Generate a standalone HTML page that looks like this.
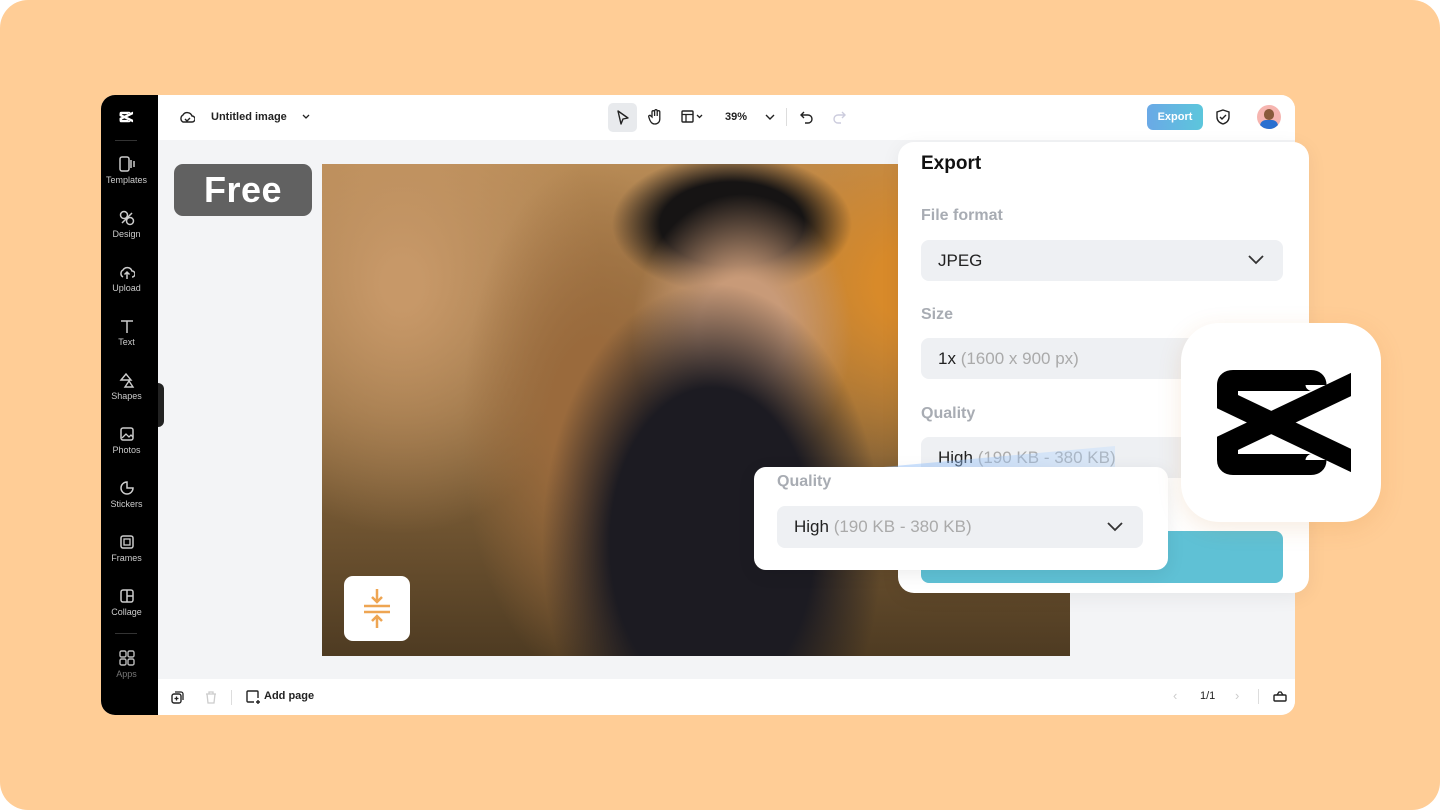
<!DOCTYPE html>
<html><head><style>
*{margin:0;padding:0;box-sizing:border-box}
body{width:1440px;height:810px;background:#fff;font-family:"Liberation Sans",sans-serif;overflow:hidden;position:relative}
.bg{position:absolute;inset:0;background:#ffcd96;border-radius:28px}
.app{position:absolute;left:101px;top:95px;width:1194px;height:620px;background:#f3f4f6;border-radius:14px;overflow:hidden}
.side{position:absolute;left:0;top:0;width:57px;height:620px;background:#000}
.side .it{position:absolute;left:-3px;width:57px;text-align:center;color:#ccc;font-size:9px}
.side svg{display:block;margin:0 auto 3px}
.top{position:absolute;left:57px;top:0;right:0;height:45px;background:#fff}
.bot{position:absolute;left:57px;bottom:0;right:0;height:36px;background:#fff}
.abs{position:absolute}
</style></head><body>
<div class="bg"></div>
<div class="app">
 <div class="side">
  <svg class="abs" style="left:14px;top:12px" width="22" height="20" viewBox="0 0 200 199"><defs><clipPath id="c1"><rect x="36" y="40" width="134" height="120"/></clipPath></defs><g clip-path="url(#c1)" fill="none" stroke="#fff" stroke-width="24"><path d="M48 83V64Q48 59 53 59H130Q133 59 133 62M48 117V135Q48 140 53 140H130Q133 140 133 137"/><path d="M20 69L190 150M20 130L190 49"/></g></svg>
  <div class="abs" style="left:14px;top:45px;width:22px;height:1px;background:#333"></div>
  <div class="it" style="top:61px"><svg width="16" height="16"><rect x="1" y="1" width="9" height="14" rx="2" stroke="#ccc" fill="none" stroke-width="1.5"/><path d="M12 4v8M15 5v6" stroke="#ccc" stroke-width="1.5"/></svg>Templates</div>
  <div class="it" style="top:115px"><svg width="16" height="16"><circle cx="5" cy="5" r="3.5" stroke="#ccc" fill="none" stroke-width="1.5"/><circle cx="11" cy="11" r="3.5" stroke="#ccc" fill="none" stroke-width="1.5"/><path d="M3 13l10-10" stroke="#ccc" stroke-width="1.5"/></svg>Design</div>
  <div class="it" style="top:169px"><svg width="16" height="16"><path d="M4 13a4 4 0 0 1 0-7a5 5 0 0 1 9 1a3 3 0 0 1 0 6M8 15V8M5.5 10.5L8 8l2.5 2.5" stroke="#ccc" fill="none" stroke-width="1.5"/></svg>Upload</div>
  <div class="it" style="top:223px"><svg width="16" height="16"><path d="M2 3h12M8 3v12" stroke="#ccc" fill="none" stroke-width="1.5"/></svg>Text</div>
  <div class="it" style="top:277px"><svg width="16" height="16"><path d="M2 8l5-6 5 6zM6 15l4-6 4 6z" stroke="#ccc" fill="none" stroke-width="1.4"/></svg>Shapes</div>
  <div class="it" style="top:331px"><svg width="16" height="16"><rect x="2" y="2" width="12" height="12" rx="2" stroke="#ccc" fill="none" stroke-width="1.5"/><path d="M3 12l4-4 3 3 2-2 2 2" stroke="#ccc" fill="none" stroke-width="1.3"/></svg>Photos</div>
  <div class="it" style="top:385px"><svg width="16" height="16"><path d="M14 8a6 6 0 1 1-6-6v6z" stroke="#ccc" fill="none" stroke-width="1.5"/></svg>Stickers</div>
  <div class="it" style="top:439px"><svg width="16" height="16"><rect x="2" y="2" width="12" height="12" rx="2" stroke="#ccc" fill="none" stroke-width="1.5"/><rect x="5" y="5" width="6" height="6" stroke="#ccc" fill="none" stroke-width="1.3"/></svg>Frames</div>
  <div class="it" style="top:493px"><svg width="16" height="16"><rect x="2" y="2" width="12" height="12" rx="2" stroke="#ccc" fill="none" stroke-width="1.5"/><path d="M8 2v12M8 8h6" stroke="#ccc" stroke-width="1.5"/></svg>Collage</div>
  <div class="abs" style="left:14px;top:538px;width:22px;height:1px;background:#333"></div>
  <div class="it" style="top:555px;color:#777"><svg width="16" height="16"><rect x="1" y="1" width="6" height="6" rx="1.5" stroke="#bbb" fill="none" stroke-width="1.4"/><rect x="9" y="1" width="6" height="6" rx="1.5" stroke="#bbb" fill="none" stroke-width="1.4"/><rect x="1" y="9" width="6" height="6" rx="1.5" stroke="#bbb" fill="none" stroke-width="1.4"/><rect x="9" y="9" width="6" height="6" rx="1.5" stroke="#bbb" fill="none" stroke-width="1.4"/></svg>Apps</div>
  <div class="abs" style="left:57px;top:288px;width:6px;height:44px;background:#222;border-radius:0 6px 6px 0"></div>
 </div>
 <div class="top">
  <svg class="abs" style="left:21px;top:14px" width="16" height="16"><path d="M4 13a4 4 0 0 1 0-7a5 5 0 0 1 9 1a3 3 0 0 1 0 6z M6 10l2 2 3-3" stroke="#222" fill="none" stroke-width="1.4"/></svg>
  <div class="abs" style="left:53px;top:16px;font-size:11px;font-weight:bold;color:#222">Untitled image</div>
  <svg class="abs" style="left:143px;top:18px" width="10" height="8"><path d="M2 2l3 3 3-3" stroke="#222" fill="none" stroke-width="1.3"/></svg>
  <div class="abs" style="left:450px;top:8px;width:29px;height:29px;background:#e8eaed;border-radius:5px"></div>
  <svg class="abs" style="left:458px;top:15px" width="14" height="16"><path d="M2 1l10 7-5 1-2 5z" stroke="#222" fill="none" stroke-width="1.4" stroke-linejoin="round"/></svg>
  <svg class="abs" style="left:490px;top:13px" width="16" height="18"><path d="M4 9V4a1.3 1.3 0 0 1 2.6 0v4V3a1.3 1.3 0 0 1 2.6 0v5V4a1.3 1.3 0 0 1 2.6 0v7c0 3-2 5-5 5s-4-2-5-4l-1-3a1 1 0 0 1 2-1z" stroke="#222" fill="none" stroke-width="1.3"/></svg>
  <svg class="abs" style="left:523px;top:15px" width="24" height="14"><rect x="1" y="1" width="11" height="11" rx="1" stroke="#222" fill="none" stroke-width="1.4"/><path d="M1 4.5h11M5 4.5V12M16 5l2.5 2.5L21 5" stroke="#222" fill="none" stroke-width="1.3"/></svg>
  <div class="abs" style="left:567px;top:16px;font-size:11px;font-weight:bold;color:#222">39%</div>
  <svg class="abs" style="left:607px;top:18px" width="10" height="8"><path d="M1 2l4 4 4-4" stroke="#222" fill="none" stroke-width="1.4"/></svg>
  <div class="abs" style="left:628px;top:13px;width:1px;height:18px;background:#ddd"></div>
  <svg class="abs" style="left:642px;top:15px" width="14" height="14"><path d="M4 2L1 5l3 3M1 5h7a4 4 0 0 1 0 8H5" stroke="#222" fill="none" stroke-width="1.4"/></svg>
  <svg class="abs" style="left:674px;top:15px" width="14" height="14"><path d="M10 2l3 3-3 3M13 5H6a4 4 0 0 0 0 8h3" stroke="#ccd" fill="none" stroke-width="1.4"/></svg>
  <div class="abs" style="left:989px;top:9px;width:56px;height:26px;border-radius:6px;background:linear-gradient(90deg,#6aa9e6,#5cc6dc);color:#fff;font-size:11px;font-weight:bold;text-align:center;line-height:26px">Export</div>
  <svg class="abs" style="left:1058px;top:14px" width="14" height="16"><path d="M7 1l6 2v5c0 4-3 6-6 7-3-1-6-3-6-7V3z M4 8l2 2 4-4" stroke="#222" fill="none" stroke-width="1.4"/></svg>
  <div class="abs" style="left:1099px;top:10px;width:24px;height:24px;border-radius:50%;background:#f6b5b0;overflow:hidden"><div class="abs" style="left:7px;top:4px;width:10px;height:11px;border-radius:5px;background:#8a5a3a"></div><div class="abs" style="left:3px;top:15px;width:18px;height:12px;border-radius:6px;background:#2a6fd0"></div></div>
 </div>
 <div class="abs" style="left:73px;top:69px;width:138px;height:52px;background:#616161;border-radius:9px;color:#fff;font-size:36px;font-weight:bold;text-align:center;line-height:52px;letter-spacing:0.5px">Free</div>
 <div class="abs" style="left:221px;top:69px;width:748px;height:492px;overflow:hidden;background:
  radial-gradient(ellipse 170px 260px at 390px 380px,#1c1b22 60%,transparent 100%),
  radial-gradient(ellipse 110px 140px at 420px 170px,#c89a78 40%,transparent 100%),
  radial-gradient(ellipse 120px 70px at 410px 60px,#161414 60%,transparent 100%),
  radial-gradient(ellipse 130px 260px at 270px 260px,#9a6a3c 30%,transparent 100%),
  radial-gradient(ellipse 230px 200px at 600px 120px,#d88a2a 20%,transparent 100%),
  radial-gradient(ellipse 200px 250px at 80px 120px,#c79868 10%,transparent 100%),
  linear-gradient(180deg,#b78a55 0%,#8d6a3e 50%,#4e3b22 100%)"></div>
 <div class="abs" style="left:243px;top:481px;width:66px;height:65px;background:#fff;border-radius:9px">
  <svg width="66" height="65"><path d="M20 30h26M20 36h26M33 13v13M28 21l5 5 5-5M33 52V40M28 45l5-5 5 5" stroke="#eea552" stroke-width="2.5" fill="none"/></svg>
 </div>
 <div class="bot">
  <svg class="abs" style="left:13px;top:11px" width="14" height="14"><rect x="1" y="4" width="9" height="9" rx="2" stroke="#222" fill="none" stroke-width="1.4"/><path d="M4 2h6a2 2 0 0 1 2 2v6M5.5 6.5v4M3.5 8.5h4" stroke="#222" fill="none" stroke-width="1.3"/></svg>
  <svg class="abs" style="left:46px;top:11px" width="14" height="14"><path d="M2 4h10M5 4V2h4v2M3 4l1 9h6l1-9" stroke="#ccc" fill="none" stroke-width="1.3"/></svg>
  <div class="abs" style="left:73px;top:11px;width:1px;height:15px;background:#ddd"></div>
  <svg class="abs" style="left:87px;top:10px" width="16" height="16"><path d="M9 13H3a1 1 0 0 1-1-1V3a1 1 0 0 1 1-1h9a1 1 0 0 1 1 1v6M13 11v4M11 13h4" stroke="#222" fill="none" stroke-width="1.4"/></svg>
  <div class="abs" style="left:106px;top:11px;font-size:11px;font-weight:bold;color:#222">Add page</div>
  <div class="abs" style="left:1015px;top:9px;font-size:13px;color:#ccc">‹</div>
  <div class="abs" style="left:1042px;top:11px;font-size:11px;color:#222">1/1</div>
  <div class="abs" style="left:1077px;top:9px;font-size:13px;color:#ccc">›</div>
  <div class="abs" style="left:1100px;top:10px;width:1px;height:15px;background:#ddd"></div>
  <svg class="abs" style="left:1115px;top:10px" width="14" height="14"><rect x="1" y="6" width="12" height="6" rx="1" stroke="#222" fill="none" stroke-width="1.4"/><path d="M4 6l2-3h2l2 3" stroke="#222" fill="none" stroke-width="1.3"/></svg>
 </div>
</div>
<div class="abs" style="left:898px;top:142px;width:411px;height:451px;background:#fff;border-radius:16px;box-shadow:0 4px 20px rgba(0,0,0,.06)">
 <div class="abs" style="left:23px;top:11px;font-size:19px;font-weight:bold;color:#111">Export</div>
 <div class="abs" style="left:23px;top:65px;font-size:16px;font-weight:bold;color:#a8acb3">File format</div>
 <div class="abs" style="left:23px;top:98px;width:362px;height:41px;background:#eef0f3;border-radius:8px"><span class="abs" style="left:17px;top:11px;font-size:17px;color:#222">JPEG</span><svg class="abs" style="left:327px;top:15px" width="16" height="10"><path d="M1 1l7 7 7-7" stroke="#333" fill="none" stroke-width="1.8"/></svg></div>
 <div class="abs" style="left:23px;top:164px;font-size:16px;font-weight:bold;color:#a8acb3">Size</div>
 <div class="abs" style="left:23px;top:196px;width:362px;height:41px;background:#eef0f3;border-radius:8px"><span class="abs" style="left:17px;top:11px;font-size:17px;color:#222">1x <span style="color:#aaa">(1600 x 900 px)</span></span></div>
 <div class="abs" style="left:23px;top:263px;font-size:16px;font-weight:bold;color:#a8acb3">Quality</div>
 <div class="abs" style="left:23px;top:295px;width:362px;height:41px;background:#eef0f3;border-radius:8px"><span class="abs" style="left:17px;top:11px;font-size:17px;color:#222">High <span style="color:#aaa">(190 KB - 380 KB)</span></span></div>
 <div class="abs" style="left:23px;top:389px;width:362px;height:52px;background:#5fc1d5;border-radius:8px"></div>
</div>
<div class="abs" style="left:850px;top:446px;width:265px;height:24px;background:linear-gradient(90deg,rgba(140,190,255,.5),rgba(180,215,255,.3));clip-path:polygon(0 100%,100% 0,100% 100%)"></div>
<div class="abs" style="left:754px;top:467px;width:414px;height:103px;background:#fff;border-radius:12px;box-shadow:0 4px 18px rgba(0,0,0,.08)">
 <div class="abs" style="left:23px;top:6px;font-size:16px;font-weight:bold;color:#a8acb3">Quality</div>
 <div class="abs" style="left:23px;top:39px;width:366px;height:42px;background:#eef0f3;border-radius:8px"><span class="abs" style="left:17px;top:11px;font-size:17px;color:#222">High <span style="color:#aaa">(190 KB - 380 KB)</span></span><svg class="abs" style="left:330px;top:16px" width="16" height="10"><path d="M1 1l7 7 7-7" stroke="#333" fill="none" stroke-width="1.8"/></svg></div>
</div>
<div class="abs" style="left:1181px;top:323px;width:200px;height:199px;background:#fff;border-radius:38px;box-shadow:0 6px 24px rgba(200,120,40,.15)">
 <svg width="200" height="199"><defs><clipPath id="c2"><rect x="36" y="40" width="134" height="120"/></clipPath></defs><g clip-path="url(#c2)" fill="none" stroke="#000" stroke-width="21"><path d="M46.5 83V62Q46.5 57.5 52 57.5H130Q135 57.5 135 62M46.5 117V137Q46.5 141.5 52 141.5H130Q135 141.5 135 137"/><path d="M20 66L190 147M20 133L190 52"/></g></svg>
</div>
</body></html>
